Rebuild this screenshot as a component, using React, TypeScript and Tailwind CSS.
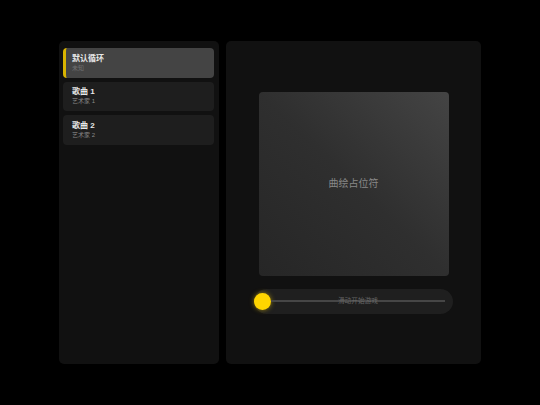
import React from "react";

const SONGS = [
  { title: "默认循环", artist: "未知" },
  { title: "歌曲 1", artist: "艺术家 1" },
  { title: "歌曲 2", artist: "艺术家 2" },
];

const FONT = {
  fontFamily: '"Liberation Sans", "Noto Sans CJK SC", sans-serif',
};

function SongList({ active }: { active: number }) {
  return (
    <div className="flex flex-col gap-[4px] rounded-[5px] bg-[#111111] pl-[4px] pr-[5px] pt-[7px]">
      {SONGS.map((song, index) => (
        <div
          key={song.title}
          className={
            index === active
              ? "flex h-[29.5px] flex-col justify-center rounded-[4px] border-l-[3px] border-[#d9b400] bg-[#444444] pl-[6px]"
              : "flex h-[29.5px] flex-col justify-center rounded-[4px] border-l-[3px] border-transparent bg-[#1e1e1e] pl-[6px]"
          }
        >
          <div className="text-[8px] font-bold leading-[11px] text-[#e8e8e8]">
            {song.title}
          </div>
          <div
            className={
              index === active
                ? "text-[6px] leading-[9px] text-[#707070]"
                : "text-[6px] leading-[9px] text-[#8a8a8a]"
            }
          >
            {song.artist}
          </div>
        </div>
      ))}
    </div>
  );
}

function StartSlider() {
  return (
    <div className="flex h-[25px] w-[199px] items-center rounded-full bg-[#1f1f1f] pr-[8px]">
      <div className="h-[17px] w-[17px] shrink-0 rounded-full bg-[#ffd500] shadow-[0_0_5px_rgba(255,213,0,0.55)]" />
      <div className="relative flex h-full flex-1 items-center justify-center">
        <div className="absolute inset-x-0 top-1/2 h-[2px] -translate-y-1/2 bg-[#464646]" />
        <span className="relative text-[6.7px] leading-none text-[#666666]">
          滑动开始游戏
        </span>
      </div>
    </div>
  );
}

export default function App() {
  return (
    <div
      className="flex h-[405px] w-full items-center justify-center bg-black"
      style={FONT}
    >
      <div className="grid h-[323px] w-[422px] grid-cols-[160px_255px] gap-[7px]">
        <SongList active={0} />

        <div className="flex flex-col items-center justify-center gap-[13px] rounded-[5px] bg-[#111111]">
          <div className="flex h-[184px] w-[190px] items-center justify-center rounded-[4px] bg-linear-to-tr from-[#262626] via-[#2f2f2f] to-[#444444]">
            <span className="text-[10px] text-[#888888]">曲绘占位符</span>
          </div>
          <StartSlider />
        </div>
      </div>
    </div>
  );
}
